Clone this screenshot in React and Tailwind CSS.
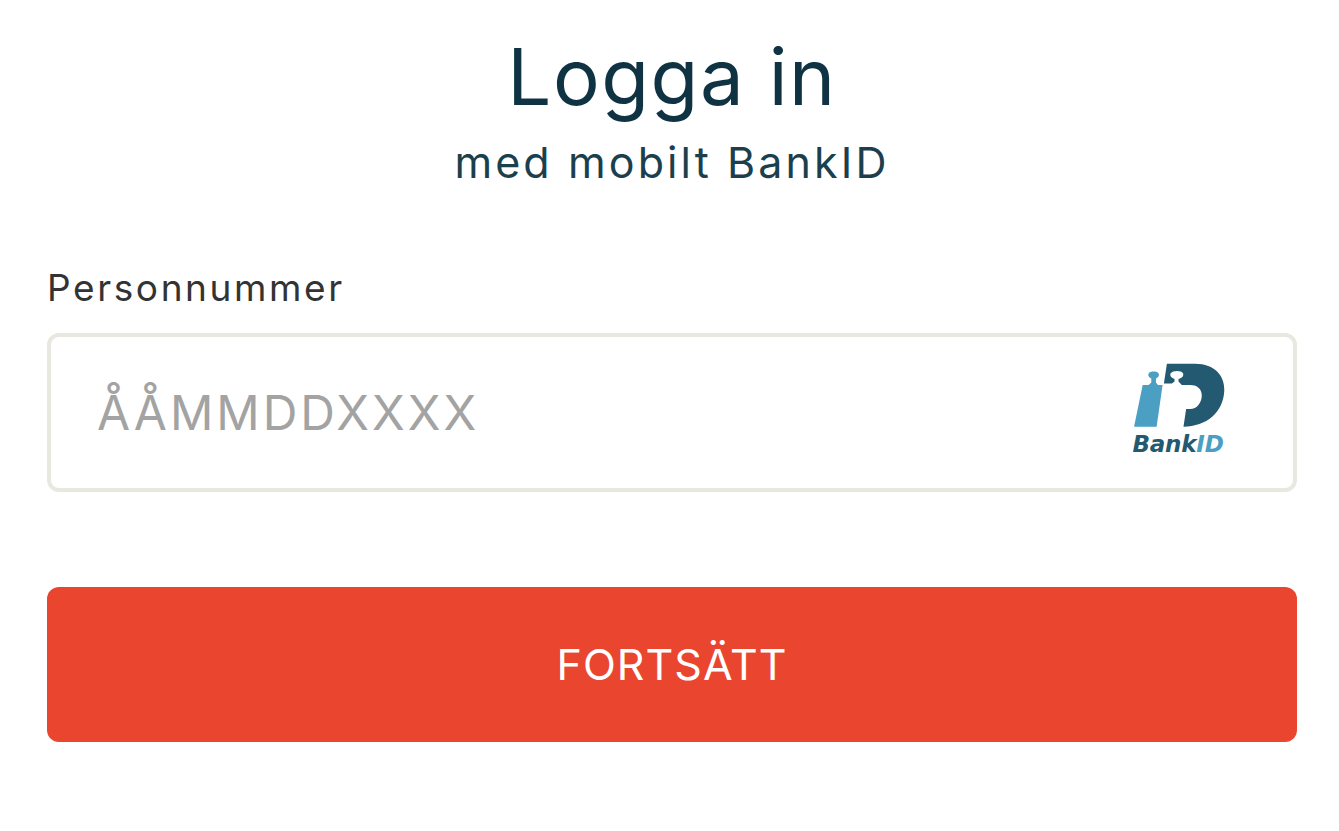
function BankIdLogo() {
  return (
    <div className="flex flex-col items-center w-[98px] pb-[9px]">
      <svg viewBox="95 60 290 205" className="w-[97px] h-[68px]">
        <path
          fill="#4a9fc3"
          d="M132 132H150L158 125V113C150 110 147 104 150 98C154 90 176 90 180 98C183 104 180 110 172 113V125L178 132H192L174 258H106Z"
        />
        <path
          fill="#235971"
          d="M205 68H290C350 68 380 105 378 150C375 215 325 258 255 258L263 205H275C295 205 312 185 310 160C308 142 295 132 275 132H250L240 122V114C252 112 256 104 254 98C250 88 222 88 216 98C213 106 220 112 228 114V122L220 128H196Z"
        />
      </svg>
      <div className="mt-[3px] font-['DejaVu_Sans',sans-serif] font-bold italic text-[23px] leading-[24px] tracking-[-0.2px] text-[#235971]">
        Bank<span className="text-[#4a9fc3]">ID</span>
      </div>
    </div>
  );
}

export default function App() {
  return (
    <div className="w-full h-[831px] bg-white font-['Inter',sans-serif] pl-[47px] pr-[42px] pt-[37px]">
      <h1 className="text-center text-[78px] leading-[80px] tracking-[1.5px] text-[#0f3342]">Logga in</h1>
      <p className="text-center text-[43px] leading-[48px] mt-[21px] tracking-[3.1px] text-[#1c3f4d]">med mobilt BankID</p>
      <label className="block mt-[80px] text-[37px] leading-[44px] tracking-[2.6px] text-[#333]">Personnummer</label>
      <div className="mt-[23px] h-[159px] border-4 border-[#e8e8e0] rounded-[12px] flex items-center justify-between pl-[46px] pr-[66px]">
        <span className="text-[48px] tracking-[3px] text-[#a3a3a3]">ÅÅMMDDXXXX</span>
        <BankIdLogo />
      </div>
      <button className="mt-[95px] w-full h-[155px] bg-[#ea452f] rounded-[12px] text-white text-[43px] tracking-[1px]">FORTSÄTT</button>
    </div>
  );
}
